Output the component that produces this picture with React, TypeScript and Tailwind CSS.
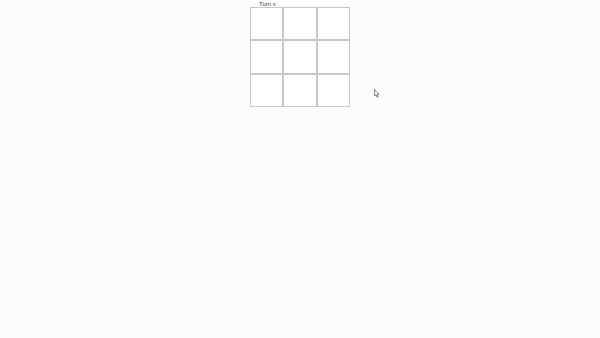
import React from 'react';

const cells = Array.from({ length: 9 }, (_, i) => i);

export default function App() {
  return (
    <div className="relative w-[600px] h-[338px] bg-[#fdfcfd] overflow-hidden" style={{ fontFamily: '"Liberation Sans", Arial, sans-serif' }}>
      <div className="flex flex-col items-center">
        <div className="w-[100px]">
          <div className="h-[7px] pt-[1px] pl-[9px] text-[6px] leading-[6px] text-[#444]">Turn x</div>
          <div className="grid grid-cols-3 grid-rows-3 w-[100px] h-[100px]">
            {cells.map((i) => (
              <div key={i} className="border border-[#c8c8c8] bg-white" />
            ))}
          </div>
        </div>
      </div>

      {/* mouse cursor */}
      <svg className="absolute left-[374px] top-[89px]" width="6" height="9" viewBox="0 0 6 9">
        <path d="M0.5 0.5 L0.5 7 L2 5.6 L3.2 8.3 L4.2 7.9 L3 5.3 L5 5.3 Z" fill="#fff" stroke="#555" strokeWidth="0.7" />
      </svg>
    </div>
  );
}
